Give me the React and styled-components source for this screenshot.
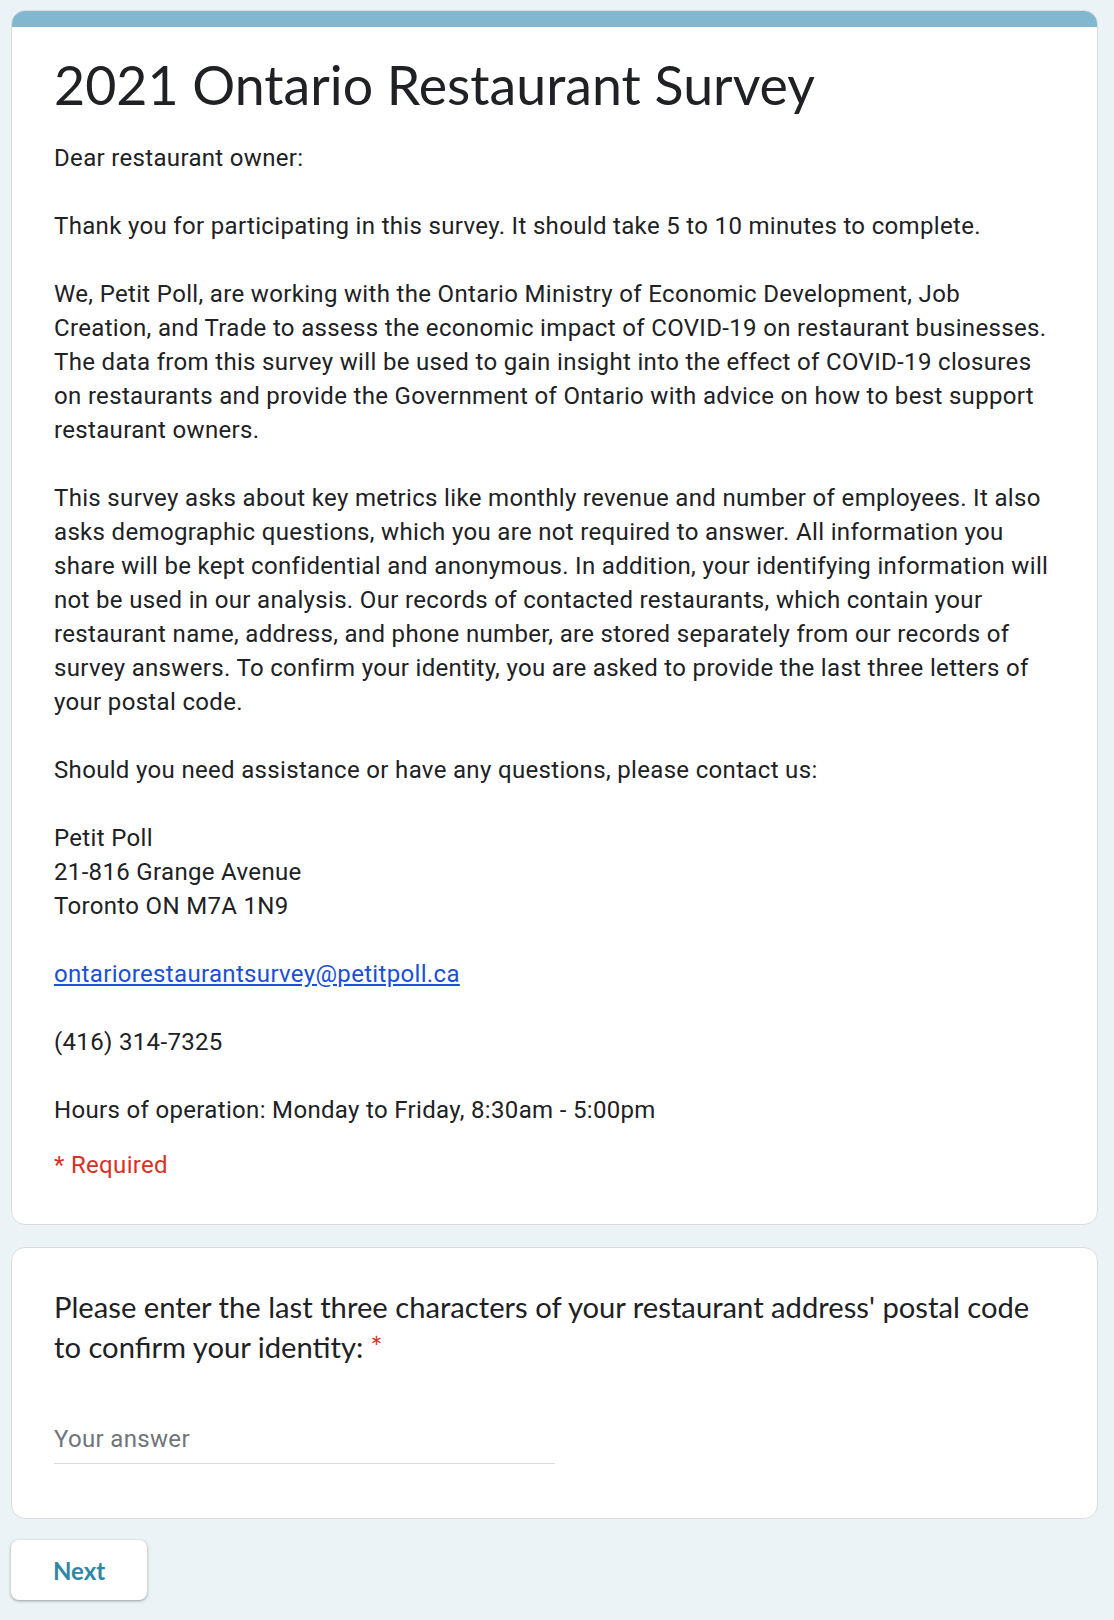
import React from "react";
import styled, { createGlobalStyle } from "styled-components";

const GlobalStyle = createGlobalStyle`
  html, body {
    margin: 0;
    padding: 0;
    background: #ecf3f6;
  }
  body {
    font-family: Roboto, "Liberation Sans", Arial, sans-serif;
    color: #202124;
  }
`;

const Page = styled.div`
  width: 1087px;
  padding: 10px 0 19px 11px;
  display: flex;
  flex-direction: column;
  gap: 22px;
`;

const Card = styled.section`
  background: #fff;
  border: 1px solid #dadce0;
  border-radius: 14px;
  overflow: hidden;
`;

const Band = styled.div`
  height: 17px;
  margin: -1px -1px 0;
  background: #81b8cf;
`;

const CardBody = styled.div`
  padding: ${({ $pad }) => $pad};
`;

const Title = styled.h1`
  margin: 0;
  font-family: Lato, "Open Sans", sans-serif;
  font-weight: 400;
  font-size: 53.7px;
  line-height: 66px;
  color: #202124;
`;

const Description = styled.div`
  margin-top: 24px;
  font-size: 24px;
  letter-spacing: 0.33px;
  line-height: 34px;
`;

const Para = styled.p`
  margin: 0 0 34px;
  &:last-child {
    margin-bottom: 0;
  }
`;

const Link = styled.a`
  color: #1a4fd8;
  text-decoration: underline;
`;

const RequiredNote = styled.div`
  margin-top: 21px;
  font-size: 24px;
  letter-spacing: 0.33px;
  line-height: 34px;
  color: #d93025;
`;

const Question = styled.div`
  font-family: Lato, "Open Sans", sans-serif;
  font-size: 29.2px;
  line-height: 40px;
  color: #202124;
`;

const Star = styled.span`
  color: #d93025;
  margin-left: 7px;
`;

const AnswerInput = styled.input`
  display: block;
  margin-top: 56px;
  width: 501px;
  box-sizing: border-box;
  padding: 0 0 8px;
  border: none;
  border-bottom: 1px solid #dadce0;
  outline: none;
  background: transparent;
  font-family: Roboto, sans-serif;
  font-size: 24px;
  letter-spacing: 0.33px;
  line-height: 32px;
  color: #202124;
  &::placeholder {
    color: #70757a;
  }
`;

const NextButton = styled.button`
  align-self: flex-start;
  width: 136px;
  height: 60px;
  margin-top: -1px;
  border: none;
  border-radius: 8px;
  background: #fff;
  box-shadow: 0 1px 2px rgba(60, 64, 67, 0.3), 0 1px 3px 1px rgba(60, 64, 67, 0.15);
  font-family: Lato, "Open Sans", sans-serif;
  font-weight: 700;
  font-size: 24px;
  color: #2f86a6;
  cursor: pointer;
`;

export default function App() {
  return (
    <>
      <GlobalStyle />
      <Page>
        <Card>
          <Band />
          <CardBody $pad="24px 42px 42px">
            <Title>2021 Ontario Restaurant Survey</Title>
            <Description>
              <Para>Dear restaurant owner:</Para>
              <Para>
                Thank you for participating in this survey. It should take 5 to
                10 minutes to complete.
              </Para>
              <Para>
                We, Petit Poll, are working with the Ontario Ministry of Economic
                Development, Job Creation, and Trade to assess the economic impact
                of COVID-19 on restaurant businesses. The data from this survey
                will be used to gain insight into the effect of COVID-19 closures
                on restaurants and provide the Government of Ontario with advice
                on how to best support restaurant owners.
              </Para>
              <Para>
                This survey asks about key metrics like monthly revenue and number
                of employees. It also asks demographic questions, which you are
                not required to answer. All information you share will be kept
                confidential and anonymous. In addition, your identifying
                information will not be used in our analysis. Our records of
                contacted restaurants, which contain your restaurant name,
                address, and phone number, are stored separately from our records
                of survey answers. To confirm your identity, you are asked to
                provide the last three letters of your postal code.
              </Para>
              <Para>
                Should you need assistance or have any questions, please contact
                us:
              </Para>
              <Para>
                Petit Poll
                <br />
                21-816 Grange Avenue
                <br />
                Toronto ON M7A 1N9
              </Para>
              <Para>
                <Link href="#">ontariorestaurantsurvey@petitpoll.ca</Link>
              </Para>
              <Para>(416) 314-7325</Para>
              <Para>Hours of operation: Monday to Friday, 8:30am - 5:00pm</Para>
            </Description>
            <RequiredNote>* Required</RequiredNote>
          </CardBody>
        </Card>
        <Card>
          <CardBody $pad="39px 42px 54px">
            <Question>
              Please enter the last three characters of your restaurant address'
              postal code to confirm your identity:<Star>*</Star>
            </Question>
            <AnswerInput placeholder="Your answer" />
          </CardBody>
        </Card>
        <NextButton>Next</NextButton>
      </Page>
    </>
  );
}
